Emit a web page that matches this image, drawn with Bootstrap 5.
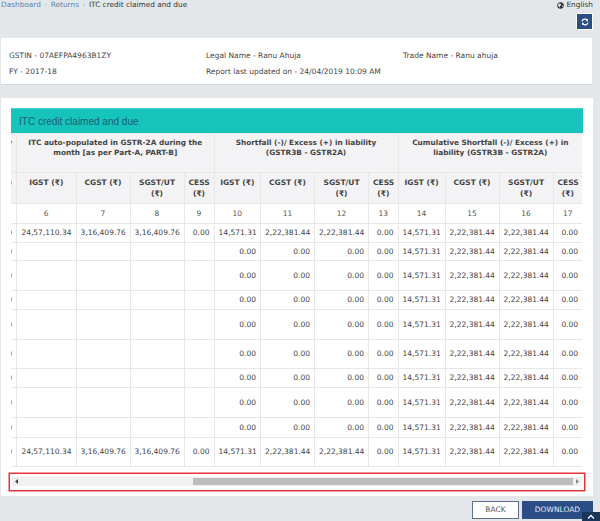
<!DOCTYPE html>
<html lang="en"><head><meta charset="utf-8"><title>ITC credit claimed and due</title>
<link href="https://cdn.jsdelivr.net/npm/bootstrap@5.3.0/dist/css/bootstrap.min.css" rel="stylesheet">
<style>
html,body{height:521px;overflow:hidden}
body{background:#e4e7ea;font-family:"DejaVu Sans",sans-serif;font-size:7.5px;color:#444;position:relative}
.top-bar{height:13px;padding:0 7px 0 1px;line-height:10px;font-size:7.35px}
.crumb-link{color:#5d7fa8;text-decoration:none}
.crumb-sep{color:#b5bcc4;margin:0 3.5px}
.crumb-now{color:#333}
.lang{color:#333;gap:2px;height:10px}
.refresh-row{height:25px;padding-right:7px}
.refresh-btn{width:17px;height:17px;padding:0;border:1px solid #fff;border-radius:0;background:#2c4e86;display:flex;align-items:center;justify-content:center}
.info-box{margin:0 8px 0 1px;height:47px;background:#fff;border-bottom:1px solid #d5d8dc;padding-top:10px;line-height:16px}
.info-box .info-col{padding-left:8px}
.main-box{margin:13px 7px 0 1px;height:398px;background:#fff;padding:10px 10px 0}
.teal-head{height:25px;background:#17c4bb;border-top:1px solid #3fd3cb;color:#175e78;font-family:"Liberation Sans",sans-serif;font-size:10px;padding:0 8px;display:flex;align-items:center}
.grid-clip{overflow:hidden;width:571px}
.grid-tbl{table-layout:fixed;width:621px;margin:0 0 0 -50px;border-collapse:collapse;color:#444}
.grid-tbl td,.grid-tbl th{border:1px solid #e7e7e7;padding:0 4px;vertical-align:middle;overflow:visible;white-space:nowrap}
.grid-tbl th{background:#f3f3f5;font-weight:700;text-align:center;vertical-align:top;color:#444;white-space:normal;line-height:10.5px}
.grid-tbl td{text-align:right}
.grid-tbl td.ctr{text-align:center;color:#555}
.grid-tbl th.ph{white-space:nowrap;text-align:right}
.c0{width:55px}.c1{width:59.5px}.c2,.c3{width:54px}.c4{width:30px}
.c5{width:46.5px}.c6,.c7{width:54px}.c8{width:29.5px}
.c9{width:47px}.c10,.c11{width:54px}.c12{width:29.5px}
.hd-a{height:39px}.grid-tbl .hd-a th{padding-top:4px;font-size:7.35px;line-height:10px}.hd-b{height:31px}.grid-tbl .hd-b th{padding-top:5px}
.r20{height:20px}.r19{height:19px}.r18{height:18px}.r30{height:30px}.r29{height:29px}
.scroll-frame{margin:6px -2px 0 -2px;height:18px;border:1px solid #e8323c;box-shadow:0 0 0 .5px #e8323c;padding:3px 2px 0;background:#fff}
.scroll-track{height:9px;background:#f1f1f1;display:flex;align-items:center}
.scroll-arrow{width:8px;flex:none;display:flex;justify-content:center}
.scroll-thumb{height:7px;width:380px;background:#bcbcbc;margin-left:173px}
.foot-row{padding:5px 7px 0 0;gap:3px}
.act-btn{height:18px;font-size:7.5px;border-radius:0;padding:0;display:flex;align-items:center;justify-content:center}
.act-back{width:47px;background:#fff;border:1px solid #5c7189;color:#555}
.act-down{width:71px;background:#2c4e86;border:1px solid #2c4e86;color:#e6ebf3}
.to-top{position:absolute;right:0;bottom:0;width:18px;height:9px;background:#1b3558;display:flex;justify-content:center;padding-top:2px}
</style></head>
<body>
<div class="top-bar d-flex justify-content-between">
<div><a class="crumb-link" href="#">Dashboard</a><span class="crumb-sep">›</span><a class="crumb-link" href="#">Returns</a><span class="crumb-sep">›</span><span class="crumb-now">ITC credit claimed and due</span></div>
<div class="lang d-flex align-items-center"><svg width="7" height="7" viewBox="0 0 8 8"><circle cx="4" cy="4" r="3.7" fill="#333"/><path d="M2 1.5l2 .5 1 1.5-1.500 1-.5 2-1-1.500-1-1zM5.500 4.500l1.500-.5-.5 2z" fill="#dfe3e6"/></svg>English</div>
</div>
<div class="refresh-row d-flex justify-content-end">
<button class="refresh-btn" type="button" aria-label="Refresh"><svg width="8" height="8" viewBox="0 0 8 8" fill="none" stroke="#fff" stroke-width="1.300"><path d="M1 3.300A3 3 0 0 1 6.300 2.300"/><path d="M7 4.700A3 3 0 0 1 1.700 5.700"/><path d="M7 .8v2.400H4.700z" fill="#fff" stroke="none"/><path d="M1 7.200V4.800h2.300z" fill="#fff" stroke="none"/></svg></button>
</div>
<div class="info-box">
<div class="row g-0"><div class="col-4 info-col">GSTIN - 07AEFPA4963B1ZY</div><div class="col-4 info-col">Legal Name - Ranu Ahuja</div><div class="col-4 info-col">Trade Name - Ranu ahuja</div></div>
<div class="row g-0"><div class="col-4 info-col">FY - 2017-18</div><div class="col-8 info-col">Report last updated on - 24/04/2019 10:09 AM</div></div>
</div>
<div class="main-box">
<div class="teal-head">ITC credit claimed and due</div>
<div class="grid-clip">
<table class="grid-tbl">
<colgroup><col class="c0"><col class="c1"><col class="c2"><col class="c3"><col class="c4"><col class="c5"><col class="c6"><col class="c7"><col class="c8"><col class="c9"><col class="c10"><col class="c11"><col class="c12"></colgroup>
<tr class="hd-a"><th class="ph">liability</th><th colspan="4">ITC auto-populated in GSTR-2A during the month [as per Part-A, PART-B]</th><th colspan="4">Shortfall (-)/ Excess (+) in liability (GSTR3B - GSTR2A)</th><th colspan="4">Cumulative Shortfall (-)/ Excess (+) in liability (GSTR3B - GSTR2A)</th></tr>
<tr class="hd-b"><th class="ph">(₹)</th><th>IGST (₹)</th><th>CGST (₹)</th><th>SGST/UT (₹)</th><th>CESS (₹)</th><th>IGST (₹)</th><th>CGST (₹)</th><th>SGST/UT (₹)</th><th>CESS (₹)</th><th>IGST (₹)</th><th>CGST (₹)</th><th>SGST/UT (₹)</th><th>CESS (₹)</th></tr>
<tr class="r20"><td></td><td class="ctr">6</td><td class="ctr">7</td><td class="ctr">8</td><td class="ctr">9</td><td class="ctr">10</td><td class="ctr">11</td><td class="ctr">12</td><td class="ctr">13</td><td class="ctr">14</td><td class="ctr">15</td><td class="ctr">16</td><td class="ctr">17</td></tr>
<tr class="r19"><td>0.00</td><td>24,57,110.34</td><td>3,16,409.76</td><td>3,16,409.76</td><td>0.00</td><td>14,571.31</td><td>2,22,381.44</td><td>2,22,381.44</td><td>0.00</td><td>14,571.31</td><td>2,22,381.44</td><td>2,22,381.44</td><td>0.00</td></tr>
<tr class="r18"><td>0.00</td><td></td><td></td><td></td><td></td><td>0.00</td><td>0.00</td><td>0.00</td><td>0.00</td><td>14,571.31</td><td>2,22,381.44</td><td>2,22,381.44</td><td>0.00</td></tr>
<tr class="r30"><td>0.00</td><td></td><td></td><td></td><td></td><td>0.00</td><td>0.00</td><td>0.00</td><td>0.00</td><td>14,571.31</td><td>2,22,381.44</td><td>2,22,381.44</td><td>0.00</td></tr>
<tr class="r19"><td>0.00</td><td></td><td></td><td></td><td></td><td>0.00</td><td>0.00</td><td>0.00</td><td>0.00</td><td>14,571.31</td><td>2,22,381.44</td><td>2,22,381.44</td><td>0.00</td></tr>
<tr class="r30"><td>0.00</td><td></td><td></td><td></td><td></td><td>0.00</td><td>0.00</td><td>0.00</td><td>0.00</td><td>14,571.31</td><td>2,22,381.44</td><td>2,22,381.44</td><td>0.00</td></tr>
<tr class="r29"><td>0.00</td><td></td><td></td><td></td><td></td><td>0.00</td><td>0.00</td><td>0.00</td><td>0.00</td><td>14,571.31</td><td>2,22,381.44</td><td>2,22,381.44</td><td>0.00</td></tr>
<tr class="r19"><td>0.00</td><td></td><td></td><td></td><td></td><td>0.00</td><td>0.00</td><td>0.00</td><td>0.00</td><td>14,571.31</td><td>2,22,381.44</td><td>2,22,381.44</td><td>0.00</td></tr>
<tr class="r30"><td>0.00</td><td></td><td></td><td></td><td></td><td>0.00</td><td>0.00</td><td>0.00</td><td>0.00</td><td>14,571.31</td><td>2,22,381.44</td><td>2,22,381.44</td><td>0.00</td></tr>
<tr class="r20"><td>0.00</td><td></td><td></td><td></td><td></td><td>0.00</td><td>0.00</td><td>0.00</td><td>0.00</td><td>14,571.31</td><td>2,22,381.44</td><td>2,22,381.44</td><td>0.00</td></tr>
<tr class="r29"><td>0.00</td><td>24,57,110.34</td><td>3,16,409.76</td><td>3,16,409.76</td><td>0.00</td><td>14,571.31</td><td>2,22,381.44</td><td>2,22,381.44</td><td>0.00</td><td>14,571.31</td><td>2,22,381.44</td><td>2,22,381.44</td><td>0.00</td></tr>
</table>
</div>
<div class="scroll-frame"><div class="scroll-track">
<div class="scroll-arrow"><svg width="3" height="5" viewBox="0 0 3 5"><path d="M3 0L0 2.500 3 5z" fill="#444"/></svg></div>
<div class="scroll-thumb"></div>
<div class="scroll-arrow"><svg width="3" height="5" viewBox="0 0 3 5"><path d="M0 0L3 2.500 0 5z" fill="#888"/></svg></div>
</div></div>
</div>
<div class="foot-row d-flex justify-content-end">
<button class="btn act-btn act-back" type="button">BACK</button>
<button class="btn act-btn act-down" type="button">DOWNLOAD</button>
</div>
<div class="to-top"><svg width="8" height="5" viewBox="0 0 8 5" fill="none" stroke="#fff" stroke-width="1.300"><path d="M1 4.500L4 1.500 7 4.500"/></svg></div>
</body></html>
